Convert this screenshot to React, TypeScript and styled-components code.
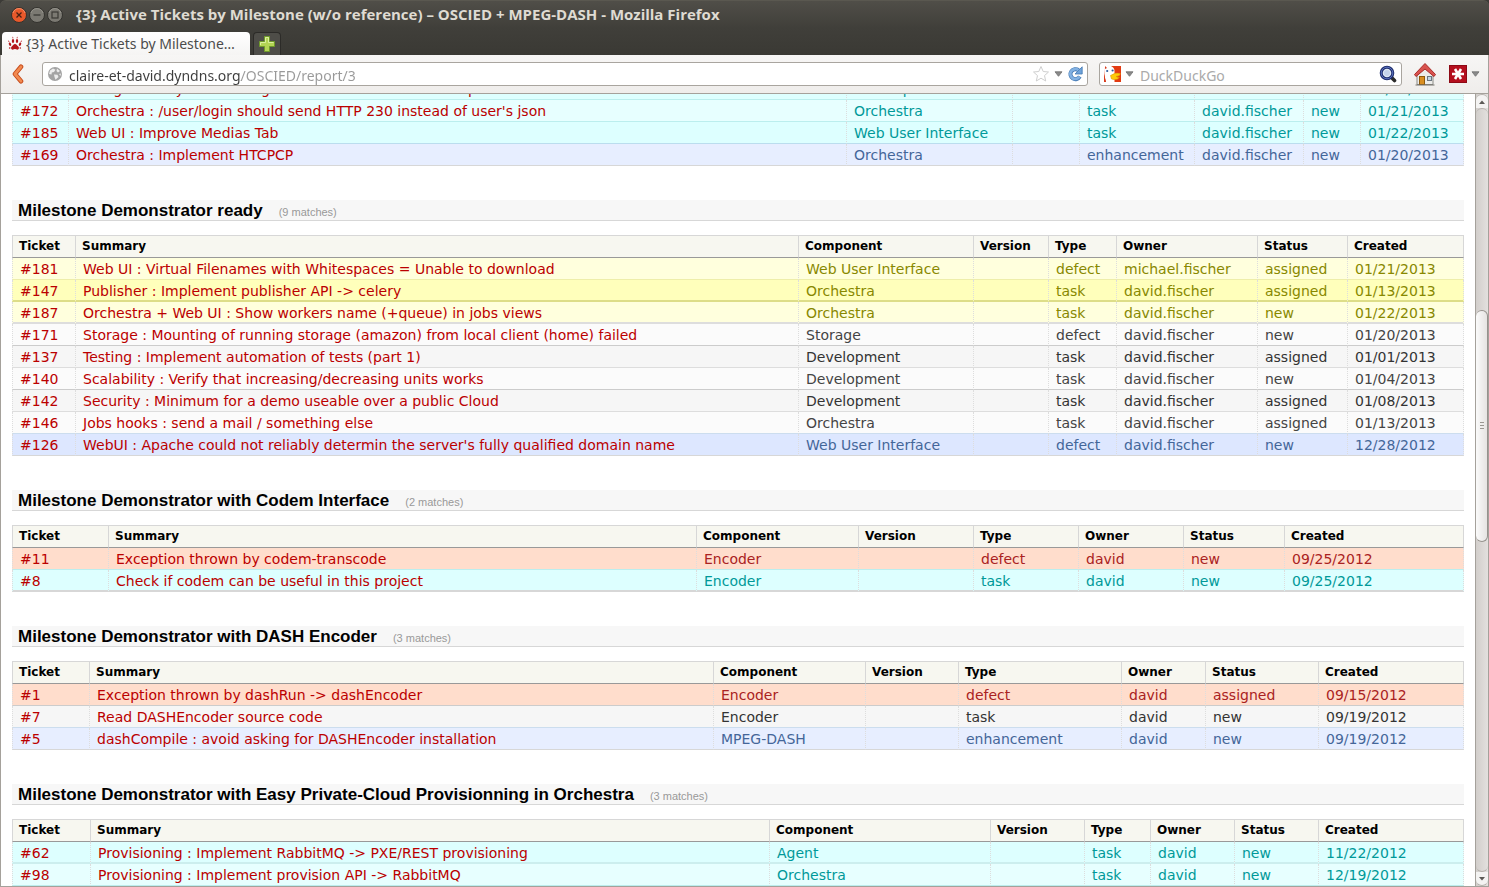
import React from 'react';
import styled, { createGlobalStyle } from 'styled-components';

const uiFont = '"Noto Sans", "Open Sans", sans-serif';
const pageFont = '"DejaVu Sans", sans-serif';
const headFont = '"Liberation Sans", Arial, sans-serif';

const GlobalStyle = createGlobalStyle`
  *, *::before, *::after { box-sizing: border-box; }
  body { margin: 0; background: #3c3b37; }
  button, input { font: inherit; }
  button { border: 0; padding: 0; background: none; color: inherit; cursor: pointer; }
`;

/* ---------- Window chrome ---------- */

const Window = styled.div`
  display: flex;
  flex-direction: column;
  height: 100vh;
  overflow: hidden;
  font-family: ${uiFont};
`;

const TitleBar = styled.header`
  display: flex;
  align-items: center;
  height: 28px;
  padding-left: 11px;
  border-top: 1px solid #5a5850;
  border-radius: 6px 6px 0 0;
  background: linear-gradient(#504e48, #403f3a);
`;

const WindowButtons = styled.div`
  display: flex;
  gap: 2px;
`;

const WindowTitle = styled.h1`
  margin: 0 0 2px 13px;
  font: bold 15px/20px "Open Sans", "Noto Sans", sans-serif;
  color: #dfdbd2;
  white-space: nowrap;
`;

const TabStrip = styled.nav`
  display: flex;
  align-items: flex-end;
  gap: 3px;
  height: 27px;
  padding-left: 2px;
  background: linear-gradient(#403f3a, #3a3934);
`;

const Tab = styled.button`
  display: flex;
  align-items: center;
  gap: 4px;
  width: 248px;
  height: 23px;
  padding-left: 6px;
  border-radius: 4px 4px 0 0;
  background: linear-gradient(#ffffff, #f5f4f3);
  font-size: 14px;
  line-height: 20px;
  color: #4c4c4c;
  white-space: nowrap;
`;

const NewTab = styled.button`
  display: grid;
  place-items: center;
  width: 28px;
  height: 23px;
  border: 1px solid #2c2b28;
  border-bottom: 0;
  border-radius: 4px 4px 0 0;
  background: #4e4d48;
`;

const Toolbar = styled.div`
  display: flex;
  align-items: center;
  height: 39px;
  padding: 0 8px 0 10px;
  border: solid #a5a19b;
  border-width: 0 1px 1px;
  background: linear-gradient(#f7f6f5, #efedeb);
`;

const IconButton = styled.button`
  display: grid;
  place-items: center;
  flex: none;
`;

const Field = styled.div<{ $width?: string }>`
  display: flex;
  align-items: center;
  flex: ${p => (p.$width ? `0 0 ${p.$width}` : '1 1 auto')};
  min-width: 0;
  height: 24px;
  padding: 0 4px;
  border: 1px solid #a9a59f;
  border-radius: 3px;
  background: #fff;
`;

const TextInput = styled.input`
  flex: 1;
  min-width: 0;
  height: 22px;
  margin-left: 6px;
  padding: 2px 0 0;
  border: 0;
  outline: 0;
  background: transparent;
  font-size: 14px;
  line-height: 20px;
  color: #3c3c3c;
  &::placeholder { color: #aaa; opacity: 1; }
`;

const AddressInput = styled(TextInput)`
  background: linear-gradient(to right, #3c3c3c 172px, #999 172px);
  background-clip: text;
  -webkit-text-fill-color: transparent;
`;

const Tools = styled.div`
  display: flex;
  align-items: center;
  margin-left: 11px;
  gap: 12px;
`;

const ToolPair = styled.div`
  display: flex;
  align-items: center;
  gap: 4px;
`;

/* ---------- Page ---------- */

const Viewport = styled.div`
  display: flex;
  flex: 1;
  min-height: 0;
  border: solid #a5a19b;
  border-width: 0 1px 1px;
  background: #fff;
`;

const Page = styled.main`
  flex: 1;
  min-width: 0;
  overflow: hidden;
  padding: 0 11px;
  font-family: ${pageFont};
`;

const Report = styled.div`
  margin-top: -16px;
`;

const GroupHeading = styled.h2`
  display: flex;
  align-items: baseline;
  height: 21px;
  margin: 34px 0 14px;
  padding-left: 6px;
  border-bottom: 1px solid #d7d7d7;
  background: #f7f7f7;
  font: bold 17px/22px ${headFont};
  color: #000;
  white-space: nowrap;
`;

const Matches = styled.span`
  margin-left: 16px;
  font-size: 11px;
  font-weight: normal;
  color: #999;
`;

const TicketTable = styled.table`
  width: 100%;
  table-layout: fixed;
  border-collapse: separate;
  border-spacing: 0;
`;

const Col = styled.col<{ $w?: number }>`
  width: ${p => (p.$w ? `${p.$w}px` : 'auto')};
`;

const HeadCell = styled.th`
  height: 23px;
  padding: 0 0 0 6px;
  border: solid #d7d7d7;
  border-width: 1px 0 1px 1px;
  border-bottom-color: #999;
  background: #f7f7f0;
  font-size: 12px;
  line-height: 21px;
  text-align: left;
  white-space: nowrap;
  &:last-child { border-right-width: 1px; }
`;

type Tone = {
  bg: string;
  line: string;
  color: string;
};

const tones: Record<string, Tone> = {
  red: { bg: '#fdc', line: '#e8c8b8', color: '#a22' },
  yellow: { bg: '#ffd', line: '#eea', color: '#880' },
  yellowDark: { bg: '#ffb', line: '#dd8', color: '#880' },
  plain: { bg: '#fbfbfb', line: '#ccc', color: '#444' },
  plainDark: { bg: '#f6f6f6', line: '#ddd', color: '#333' },
  cyan: { bg: '#e7ffff', line: '#bee', color: '#099' },
  cyanDark: { bg: '#dff', line: '#bee', color: '#099' },
  blue: { bg: '#e7eeff', line: '#d7d7d7', color: '#469' },
  blueDark: { bg: '#dde7ff', line: '#d7d7d7', color: '#469' },
};

const Row = styled.tr<{ $tone: Tone; $line?: string; $thick?: boolean }>`
  background: ${p => p.$tone.bg};
  color: ${p => p.$tone.color};
  td {
    border-bottom: ${p => (p.$thick ? 2 : 1)}px solid ${p => p.$line || p.$tone.line};
  }
`;

const Cell = styled.td`
  height: 22px;
  padding: 2px 0 0 7px;
  border-left: 1px dotted #ddd;
  font-size: 14px;
  line-height: 18px;
  vertical-align: top;
  white-space: nowrap;
  &:last-child { border-right: 1px dotted #ddd; }
`;

const TicketLink = styled.a`
  color: #b00;
  text-decoration: none;
`;

/* ---------- Scroll bar ---------- */

const ScrollBar = styled.div`
  display: flex;
  flex-direction: column;
  flex: 0 0 13px;
  border-left: 1px solid #a5a19b;
  background: linear-gradient(to right, #d2cecb, #e3e0de);
`;

const ScrollArrow = styled.button<{ $down?: boolean }>`
  display: grid;
  place-items: center;
  flex: 0 0 14px;
  border: 1px solid #b5b1ac;
  border-width: ${p => (p.$down ? '0 0 1px' : '1px 0 0')};
  border-radius: ${p => (p.$down ? '0 0 7px 7px' : '7px 7px 0 0')};
  background: #f4f3f2;
`;

const Trough = styled.div`
  display: flex;
  flex-direction: column;
  flex: 1;
  border: 1px solid #b5b1ac;
  border-width: 1px 0;
  border-radius: 6px;
`;

const TroughSpace = styled.div<{ $part: number }>`
  flex: ${p => p.$part} 0 0;
`;

const Thumb = styled.div`
  display: grid;
  place-items: center;
  flex: 231 0 0;
  border: 1px solid #96928d;
  border-left: 0;
  border-radius: 6px;
  background: linear-gradient(to right, #fafafa, #e6e4e2);
`;

/* ---------- Icons ---------- */

const WinIcon = ({ kind }: { kind: 'close' | 'min' | 'max' }) => (
  <svg width="16" height="16" viewBox="0 0 16 16">
    <circle cx="8" cy="8" r="7.5" fill={kind === 'close' ? '#e9592b' : '#7b7972'} stroke="#33322e" />
    <path d="M2 6a6.3 6.3 0 0 1 12 0" fill="none" stroke={kind === 'close' ? '#f68d66' : '#96948c'} />
    {kind === 'close' && <path d="M5.5 5.5l5 5m0-5l-5 5" stroke="#4a2013" strokeWidth="1.3" />}
    {kind === 'min' && <path d="M4.500 8h7" stroke="#3a3935" strokeWidth="1.300" />}
    {kind === 'max' && <rect x="5" y="5" width="6" height="6" fill="none" stroke="#3a3935" strokeWidth="1.200" />}
  </svg>
);

const PawIcon = () => (
  <svg width="14" height="16" viewBox="0 0 14 16" fill="#b4161b">
    <path d="M7 8c1.500 0 2.200 1.500 3.300 2.500 1.300 1.200.6 3.300-1 3.200-.9-.1-1.400-.6-2.300-.6s-1.400.5-2.300.6c-1.600.1-2.300-2-1-3.200C4.800 9.500 5.500 8 7 8z" />
    <ellipse cx="5" cy="5" rx="1.200" ry="2" />
    <ellipse cx="9" cy="5" rx="1.200" ry="2" />
    <ellipse cx="2" cy="8.200" rx="1.100" ry="1.800" transform="rotate(-25 2 8.200)" />
    <ellipse cx="12" cy="8.200" rx="1.100" ry="1.800" transform="rotate(25 12 8.200)" />
    <path d="M4.300 2.300L4.800.6l.7 1.700zM8.500 2.300L9.200.6l.5 1.700zM.4 6L.3 4.300l1.300 1.200zM12.400 5.500l1.300-1.200-.1 1.700z" />
    <circle cx="1.700" cy="12" r=".8" />
    <circle cx="12.300" cy="12" r=".8" />
  </svg>
);

const PlusIcon = () => (
  <svg width="18" height="18" viewBox="0 0 18 18">
    <path d="M6.500 1.500h5v5h5v5h-5v5h-5v-5h-5v-5h5z" fill="#b4d455" stroke="#6f9a2a" />
    <path d="M7.500 7.500v-5h3v5h5M2.500 10v-2.500h5" fill="none" stroke="#dcefa0" />
  </svg>
);

const BackIcon = () => (
  <svg width="14" height="20" viewBox="0 0 14 20">
    <path d="M10 2.800L4 10l6 7.200" fill="none" stroke="#c54a1b" strokeWidth="4.600" strokeLinecap="round" strokeLinejoin="round" />
    <path d="M10 2.800L4 10l6 7.200" fill="none" stroke="#f28a50" strokeWidth="2.800" strokeLinecap="round" strokeLinejoin="round" />
  </svg>
);

const GlobeIcon = () => (
  <svg width="16" height="16" viewBox="0 0 16 16">
    <circle cx="8" cy="8" r="7" fill="#a3a3a3" />
    <path d="M3 4.500l3-2 2.500 1.300L7 6 4.800 6.500 4.500 8.500 2 8zM10 2.500l3 2.500-2 1.500-1.500-1.500zM7 8.500l3.500.3L11.500 11 8.500 13.800 7.500 11zM12 8l2-.5-.5 2.500z" fill="#ececec" />
  </svg>
);

const StarIcon = () => (
  <svg width="18" height="18" viewBox="0 0 18 18">
    <path d="M9 1.500l2.200 5 5.300.5-4 3.600 1.200 5.400L9 13.200 4.300 16l1.200-5.400-4-3.600 5.300-.5z" fill="#fff" stroke="#cfcfcf" strokeLinejoin="round" />
  </svg>
);

const DownIcon = () => (
  <svg width="9" height="6" viewBox="0 0 9 6">
    <path d="M1 .8h7L4.500 5.300z" fill="#8a8a8a" stroke="#6e6e6e" strokeWidth=".8" />
  </svg>
);

const ReloadIcon = () => (
  <svg width="16" height="16" viewBox="0 0 16 16">
    <path d="M11.500 4.200A5 5 0 1 0 12.800 10.600" fill="none" stroke="#4479b3" strokeWidth="4" />
    <path d="M11.500 4.200A5 5 0 1 0 12.500 10.800" fill="none" stroke="#82b1e2" strokeWidth="2.600" />
    <path d="M15.200 .8v7.200H8z" fill="#6fa3da" stroke="#4479b3" strokeWidth=".8" />
  </svg>
);

const DuckIcon = () => (
  <svg width="17" height="16" viewBox="0 0 17 16">
    <rect width="17" height="16" fill="#e33b12" />
    <path d="M0 0h7q3.500 1.500 3.500 5V16H2Q0 10 0 0z" fill="#fff" />
    <path d="M0 8l2 8H0zM1 0l2 2-2 1z" fill="#d93a1c" />
    <circle cx="3.200" cy="5" r="1.100" fill="#2c5b9c" />
    <circle cx="8.600" cy="4.500" r="1.100" fill="#2c5b9c" />
    <path d="M6.500 9.500q5-3.500 9.800-2 .2 2.500-4.300 3 2 1.200 3.500.8-2 3.500-8 1.700z" fill="#fdcb0a" stroke="#e09a00" strokeWidth=".6" />
  </svg>
);

const SearchIcon = () => (
  <svg width="18" height="18" viewBox="0 0 18 18">
    <path d="M12.500 12.500l3 3" stroke="#2b2b2b" strokeWidth="3.600" strokeLinecap="round" />
    <circle cx="8" cy="8" r="5.800" fill="#dfe8f5" stroke="#1f2f6e" strokeWidth="3" />
    <circle cx="8" cy="8" r="5.800" fill="none" stroke="#5a70bd" strokeWidth="1" />
    <circle cx="8" cy="8" r="3" fill="#c5d3ea" />
  </svg>
);

const HomeIcon = () => (
  <svg width="24" height="24" viewBox="0 0 24 24">
    <path d="M4 11.500L12 4l8 7.500V22.500H4z" fill="#ececea" stroke="#8a8a85" />
    <path d="M1.500 12.500L12 1.500l10.500 11-1.500 2L12 7 3 14.500z" fill="#d9534f" stroke="#a92b28" strokeLinejoin="round" />
    <rect x="6.500" y="14.500" width="5" height="8" fill="#d98e22" stroke="#8f5a0c" />
    <rect x="14.500" y="14.500" width="4" height="4" fill="#c4d7e6" stroke="#6b7680" />
    <path d="M2.500 23h19" stroke="#77756e" />
  </svg>
);

const AsteriskIcon = () => (
  <svg width="18" height="18" viewBox="0 0 18 18">
    <rect x=".5" y=".5" width="17" height="17" fill="#b40f1e" stroke="#8d0915" />
    <path d="M3 9h12M6 4l6 10M12 4L6 14" stroke="#fff" strokeWidth="2.600" />
  </svg>
);

const ArrowGlyph = ({ down }: { down?: boolean }) => (
  <svg width="6" height="4" viewBox="0 0 6 4">
    <path d={down ? 'M0 0h6L3 3.600z' : 'M0 4h6L3 .4z'} fill="#5c5a56" />
  </svg>
);

const GripIcon = () => (
  <svg width="4" height="8" viewBox="0 0 4 8">
    <path d="M0 .5h4M0 3.500h4M0 6.500h4" stroke="#9a9791" />
  </svg>
);

/* ---------- Data ---------- */

type Ticket = {
  cells: [string, string, string, string, string, string, string, string];
  tone: keyof typeof tones;
  line?: string;
  thick?: boolean;
};

type Group = { title?: string; cols: number[]; tickets: Ticket[] };

const t = (
  id: string, summary: string, component: string, type: string, owner: string,
  status: string, created: string, tone: string, line?: string, thick?: boolean,
): Ticket => ({ cells: [`#${id}`, summary, component, '', type, owner, status, created], tone, line, thick });

/* cols: ticket, component, version, type, owner, status, created; the summary takes what is left */
const groups: Group[] = [
  {
    cols: [56, 166, 67, 115, 109, 57, 104],
    tickets: [
      t('170', 'Storage : Verify the running instances into the cloud stop', 'Development', 'task', 'david.fischer', 'new', '01/20/2013', 'cyanDark'),
      t('172', "Orchestra : /user/login should send HTTP 230 instead of user's json", 'Orchestra', 'task', 'david.fischer', 'new', '01/21/2013', 'cyan'),
      t('185', 'Web UI : Improve Medias Tab', 'Web User Interface', 'task', 'david.fischer', 'new', '01/22/2013', 'cyanDark', '#bde'),
      t('169', 'Orchestra : Implement HTCPCP', 'Orchestra', 'enhancement', 'david.fischer', 'new', '01/20/2013', 'blue'),
    ],
  },
  {
    title: 'Demonstrator ready',
    cols: [63, 175, 75, 68, 141, 90, 117],
    tickets: [
      t('181', 'Web UI : Virtual Filenames with Whitespaces = Unable to download', 'Web User Interface', 'defect', 'michael.fischer', 'assigned', '01/21/2013', 'yellow'),
      t('147', 'Publisher : Implement publisher API -> celery', 'Orchestra', 'task', 'david.fischer', 'assigned', '01/13/2013', 'yellowDark', '#dd8', true),
      t('187', 'Orchestra + Web UI : Show workers name (+queue) in jobs views', 'Orchestra', 'task', 'david.fischer', 'new', '01/22/2013', 'yellow', '#ddd', true),
      t('171', 'Storage : Mounting of running storage (amazon) from local client (home) failed', 'Storage', 'defect', 'david.fischer', 'new', '01/20/2013', 'plain'),
      t('137', 'Testing : Implement automation of tests (part 1)', 'Development', 'task', 'david.fischer', 'assigned', '01/01/2013', 'plainDark'),
      t('140', 'Scalability : Verify that increasing/decreasing units works', 'Development', 'task', 'david.fischer', 'new', '01/04/2013', 'plain'),
      t('142', 'Security : Minimum for a demo useable over a public Cloud', 'Development', 'task', 'david.fischer', 'assigned', '01/08/2013', 'plainDark'),
      t('146', 'Jobs hooks : send a mail / something else', 'Orchestra', 'task', 'david.fischer', 'assigned', '01/13/2013', 'plain', '#cde'),
      t('126', "WebUI : Apache could not reliably determin the server's fully qualified domain name", 'Web User Interface', 'defect', 'david.fischer', 'new', '12/28/2012', 'blueDark'),
    ],
  },
  {
    title: 'Demonstrator with Codem Interface',
    cols: [96, 162, 115, 105, 105, 101, 180],
    tickets: [
      t('11', 'Exception thrown by codem-transcode', 'Encoder', 'defect', 'david', 'new', '09/25/2012', 'red', '#bee'),
      t('8', 'Check if codem can be useful in this project', 'Encoder', 'task', 'david', 'new', '09/25/2012', 'cyanDark', '#d7d7d7', true),
    ],
  },
  {
    title: 'Demonstrator with DASH Encoder',
    cols: [77, 152, 93, 163, 84, 113, 146],
    tickets: [
      t('1', 'Exception thrown by dashRun -> dashEncoder', 'Encoder', 'defect', 'david', 'assigned', '09/15/2012', 'red', '#ccc'),
      t('7', 'Read DASHEncoder source code', 'Encoder', 'task', 'david', 'new', '09/19/2012', 'plainDark', '#cde'),
      t('5', 'dashCompile : avoid asking for DASHEncoder installation', 'MPEG-DASH', 'enhancement', 'david', 'new', '09/19/2012', 'blue'),
    ],
  },
  {
    title: 'Demonstrator with Easy Private-Cloud Provisionning in Orchestra',
    cols: [78, 221, 94, 66, 84, 84, 146],
    tickets: [
      t('62', 'Provisioning : Implement RabbitMQ -> PXE/REST provisioning', 'Agent', 'task', 'david', 'new', '11/22/2012', 'cyanDark', '#cee', true),
      t('98', 'Provisioning : Implement provision API -> RabbitMQ', 'Orchestra', 'task', 'david', 'new', '12/19/2012', 'cyan'),
    ],
  },
];

const matchCounts = [0, 9, 2, 3, 3];
const columns = ['Ticket', 'Summary', 'Component', 'Version', 'Type', 'Owner', 'Status', 'Created'];

const TicketGroup = ({ group, count }: { group: Group; count: number }) => (
  <section>
    {group.title && (
      <GroupHeading>
        Milestone {group.title}
        <Matches>({count} matches)</Matches>
      </GroupHeading>
    )}
    <TicketTable>
      <colgroup>
        <Col $w={group.cols[0]} />
        <Col />
        {group.cols.slice(1).map((w, i) => <Col key={i} $w={w} />)}
      </colgroup>
      {group.title && (
        <thead>
          <tr>{columns.map(c => <HeadCell key={c} scope="col">{c}</HeadCell>)}</tr>
        </thead>
      )}
      <tbody>
        {group.tickets.map(ticket => (
          <Row key={ticket.cells[0]} $tone={tones[ticket.tone]} $line={ticket.line} $thick={ticket.thick}>
            {ticket.cells.map((text, i) => (
              <Cell key={i}>{i < 2 ? <TicketLink href={`/OSCIED/ticket/${ticket.cells[0].slice(1)}`}>{text}</TicketLink> : text}</Cell>
            ))}
          </Row>
        ))}
      </tbody>
    </TicketTable>
  </section>
);

const BackButton = styled(IconButton)`
  width: 14px;
  margin-right: 17px;
`;

const FieldGap = styled.div`
  flex: 0 0 11px;
`;

const FieldTools = styled.div`
  display: flex;
  align-items: center;
  gap: 4px;
`;

export default function App() {
  return (
    <>
      <GlobalStyle />
      <Window>
        <TitleBar>
          <WindowButtons>
            <IconButton aria-label="Close"><WinIcon kind="close" /></IconButton>
            <IconButton aria-label="Minimize"><WinIcon kind="min" /></IconButton>
            <IconButton aria-label="Maximize"><WinIcon kind="max" /></IconButton>
          </WindowButtons>
          <WindowTitle>{'{3} Active Tickets by Milestone (w/o reference) – OSCIED + MPEG-DASH - Mozilla Firefox'}</WindowTitle>
        </TitleBar>
        <TabStrip>
          <Tab><PawIcon />{'{3} Active Tickets by Milestone…'}</Tab>
          <NewTab aria-label="Open a new tab"><PlusIcon /></NewTab>
        </TabStrip>
        <Toolbar>
          <BackButton aria-label="Back"><BackIcon /></BackButton>
          <Field>
            <GlobeIcon />
            <AddressInput aria-label="Address" defaultValue="claire-et-david.dyndns.org/OSCIED/report/3" />
            <FieldTools>
              <IconButton aria-label="Bookmark"><StarIcon /></IconButton>
              <IconButton aria-label="History"><DownIcon /></IconButton>
              <IconButton aria-label="Reload"><ReloadIcon /></IconButton>
            </FieldTools>
          </Field>
          <FieldGap />
          <Field $width="303px">
            <FieldTools>
              <IconButton aria-label="Search engine"><DuckIcon /></IconButton>
              <IconButton aria-label="Choose engine"><DownIcon /></IconButton>
            </FieldTools>
            <TextInput aria-label="Search" placeholder="DuckDuckGo" />
            <IconButton aria-label="Go"><SearchIcon /></IconButton>
          </Field>
          <Tools>
            <IconButton aria-label="Home"><HomeIcon /></IconButton>
            <ToolPair>
              <IconButton aria-label="Passwords"><AsteriskIcon /></IconButton>
              <IconButton aria-label="Password menu"><DownIcon /></IconButton>
            </ToolPair>
          </Tools>
        </Toolbar>
        <Viewport>
          <Page>
            <Report>
              {groups.map((g, i) => <TicketGroup key={i} group={g} count={matchCounts[i]} />)}
            </Report>
          </Page>
          <ScrollBar>
            <ScrollArrow aria-label="Scroll up"><ArrowGlyph /></ScrollArrow>
            <Trough>
              <TroughSpace $part={202} />
              <Thumb><GripIcon /></Thumb>
              <TroughSpace $part={330} />
            </Trough>
            <ScrollArrow aria-label="Scroll down" $down><ArrowGlyph down /></ScrollArrow>
          </ScrollBar>
        </Viewport>
      </Window>
    </>
  );
}
